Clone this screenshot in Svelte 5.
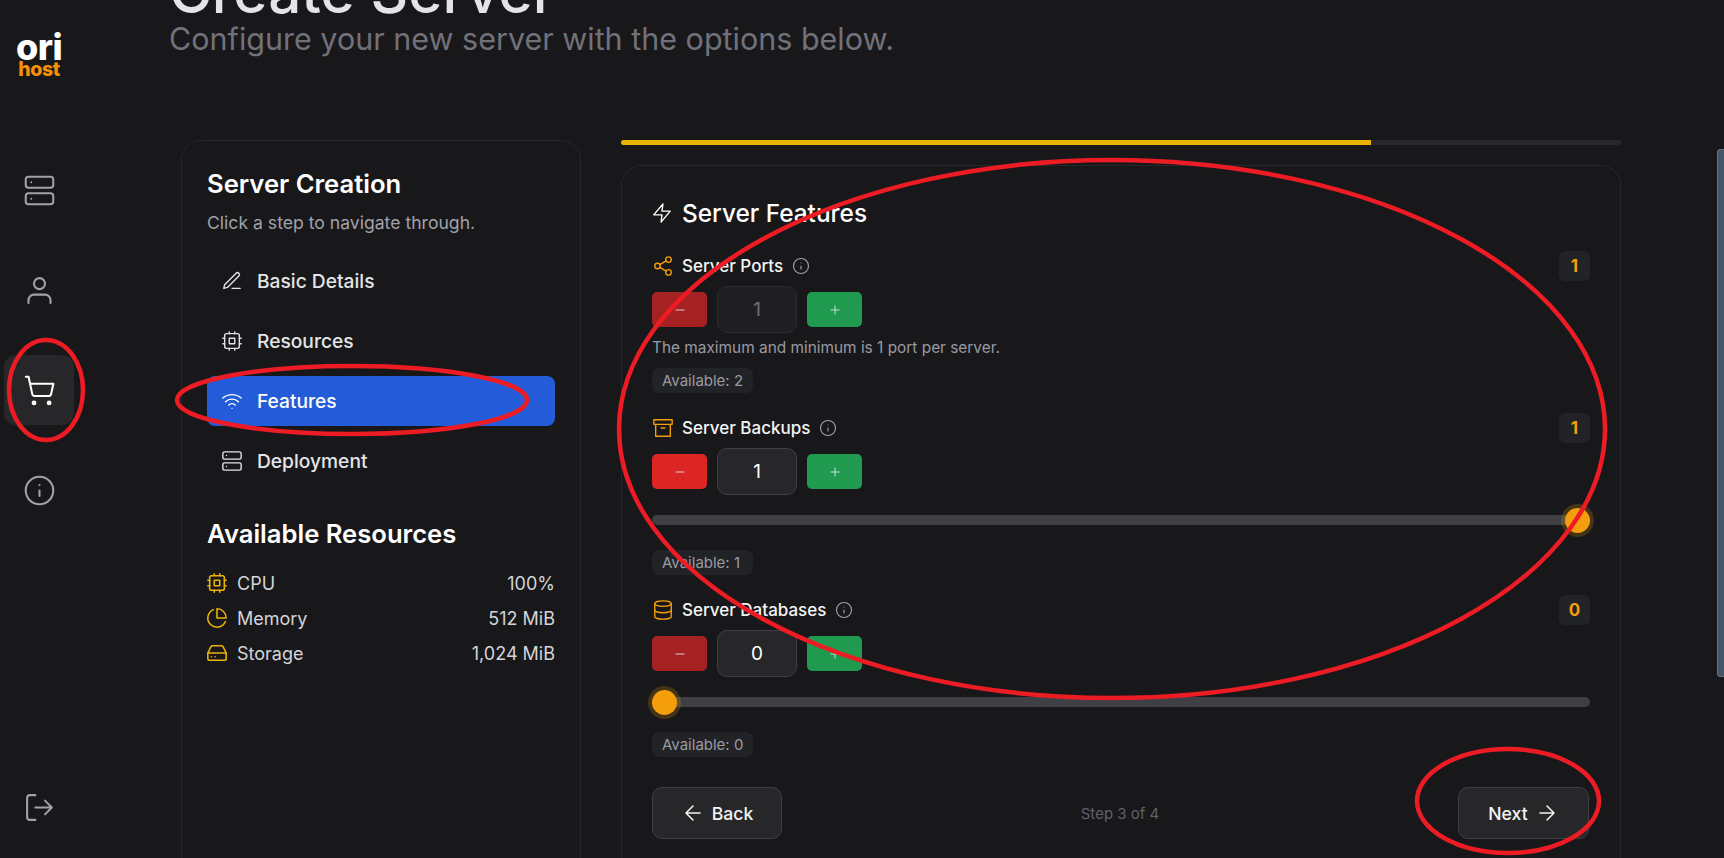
<script>
  const steps = [
    { id: 'basic', label: 'Basic Details', icon: 'pen' },
    { id: 'resources', label: 'Resources', icon: 'cpu' },
    { id: 'features', label: 'Features', icon: 'wifi', active: true },
    { id: 'deployment', label: 'Deployment', icon: 'server' }
  ];

  const available = [
    { label: 'CPU', value: '100%', icon: 'cpu' },
    { label: 'Memory', value: '512 MiB', icon: 'pie' },
    { label: 'Storage', value: '1,024 MiB', icon: 'drive' }
  ];

  const features = [
    { title: 'Server Ports', icon: 'share', value: 1, left: 2, locked: true, hint: 'The maximum and minimum is 1 port per server.' },
    { title: 'Server Backups', icon: 'archive', value: 1, left: 1, max: 1 },
    { title: 'Server Databases', icon: 'database', value: 0, left: 0, max: 1, noMinus: true }
  ];

  const icons = {
    pen: '<path d="M12 20h9"/><path d="M16.5 3.5a2.12 2.12 0 0 1 3 3L7 19l-4 1 1-4Z"/>',
    cpu: '<rect x="4" y="4" width="16" height="16" rx="2"/><rect x="9" y="9" width="6" height="6"/><path d="M15 2v2M15 20v2M2 15h2M2 9h2M20 15h2M20 9h2M9 2v2M9 20v2"/>',
    wifi: '<path d="M12 20h.01"/><path d="M2 8.82a15 15 0 0 1 20 0"/><path d="M5 12.86a10 10 0 0 1 14 0"/><path d="M8.5 16.43a5 5 0 0 1 7 0"/>',
    server: '<rect x="2" y="2" width="20" height="8" rx="2"/><rect x="2" y="14" width="20" height="8" rx="2"/><path d="M6 6h.01M6 18h.01"/>',
    pie: '<path d="M21.21 15.89A10 10 0 1 1 8 2.83"/><path d="M22 12A10 10 0 0 0 12 2v10z"/>',
    drive: '<path d="M22 12H2"/><path d="M5.45 5.11 2 12v6a2 2 0 0 0 2 2h16a2 2 0 0 0 2-2v-6l-3.45-6.89A2 2 0 0 0 16.76 4H7.24a2 2 0 0 0-1.79 1.11z"/><path d="M6 16h.01M10 16h.01"/>',
    zap: '<path d="M13 2 3 14h9l-1 8 10-12h-9l1-8z"/>',
    share: '<circle cx="18" cy="5" r="3"/><circle cx="6" cy="12" r="3"/><circle cx="18" cy="19" r="3"/><path d="m8.59 13.51 6.83 3.98M15.41 6.51l-6.82 3.98"/>',
    archive: '<rect x="2" y="3" width="20" height="5"/><path d="M4 8v13h16V8"/><path d="M10 12h4"/>',
    database: '<ellipse cx="12" cy="5" rx="9" ry="3"/><path d="M3 5v14c0 1.66 4 3 9 3s9-1.34 9-3V5"/><path d="M3 12c0 1.66 4 3 9 3s9-1.34 9-3"/>',
    info: '<circle cx="12" cy="12" r="10"/><path d="M12 16v-4M12 8h.01"/>',
    user: '<circle cx="12" cy="7" r="4"/><path d="M4 21v-2a4 4 0 0 1 4-4h8a4 4 0 0 1 4 4v2"/>',
    cart: '<circle cx="8" cy="21" r="1"/><circle cx="19" cy="21" r="1"/><path d="M2.05 2.05h2l2.66 12.42a2 2 0 0 0 2 1.58h9.78a2 2 0 0 0 1.95-1.57l1.65-7.43H5.12"/>',
    logout: '<path d="M9 21H5a2 2 0 0 1-2-2V5a2 2 0 0 1 2-2h4"/><path d="m16 17 5-5-5-5M21 12H9"/>',
    left: '<path d="m12 19-7-7 7-7M19 12H5"/>',
    right: '<path d="M5 12h14M12 5l7 7-7 7"/>',
    minus: '<path d="M5 12h14"/>',
    plus: '<path d="M5 12h14M12 5v14"/>'
  };
</script>

{#snippet icon(name, cls)}
  <svg class={cls} viewBox="0 0 24 24" fill="none" stroke="currentColor" stroke-linecap="round" stroke-linejoin="round" aria-hidden="true">{@html icons[name]}</svg>
{/snippet}

<div class="app">
  <aside class="rail">
    <div class="logo"><span class="ori">ori</span><span class="host">host</span></div>
    <nav class="rail-nav">
      <a class="rail-link" href="#servers">{@render icon('server', 'rail-icon')}</a>
      <a class="rail-link" href="#account">{@render icon('user', 'rail-icon')}</a>
      <a class="rail-link current" href="#store">{@render icon('cart', 'rail-icon')}</a>
      <a class="rail-link" href="#about">{@render icon('info', 'rail-icon')}</a>
    </nav>
    <a class="rail-link logout" href="#logout">{@render icon('logout', 'rail-icon')}</a>
  </aside>

  <main class="page">
    <header class="page-head">
      <h1>Create Server</h1>
      <p>Configure your new server with the options below.</p>
    </header>

    <div class="columns">
      <section class="steps-card">
        <h2>Server Creation</h2>
        <p class="steps-sub">Click a step to navigate through.</p>
        <ul class="steps">
          {#each steps as step}
            <li class="step" class:active={step.active}>
              {@render icon(step.icon, 'step-icon')}
              <span>{step.label}</span>
            </li>
          {/each}
        </ul>

        <h2 class="res-title">Available Resources</h2>
        <ul class="res-list">
          {#each available as res}
            <li class="res">
              {@render icon(res.icon, 'res-icon')}
              <span class="res-label">{res.label}</span>
              <span class="res-value">{res.value}</span>
            </li>
          {/each}
        </ul>
      </section>

      <div class="form-col">
        <div class="progress"><div class="progress-fill" style="width: 75%"></div></div>

        <section class="form-card">
          <h3 class="form-title">{@render icon('zap', 'title-icon')}Server Features</h3>

          {#each features as f}
            <div class="feature">
              <div class="feature-head">
                {@render icon(f.icon, 'feature-icon')}
                <span class="feature-name">{f.title}</span>
                {@render icon('info', 'info-icon')}
                <span class="count">{f.value}</span>
              </div>
              <div class="stepper">
                <button class="btn-minus" class:dim={f.locked || f.noMinus} aria-label="Decrease">{@render icon('minus', 'step-glyph')}</button>
                <input class="qty" class:locked={f.locked} value={f.value} readonly />
                <button class="btn-plus" aria-label="Increase">{@render icon('plus', 'step-glyph')}</button>
              </div>
              {#if f.hint}
                <p class="hint">{f.hint}</p>
              {:else}
                <input class="range" type="range" min="0" max={f.max} value={f.value} />
              {/if}
              <span class="avail" class:after-range={!f.hint}>Available: {f.left}</span>
            </div>
          {/each}

          <div class="form-foot">
            <button class="nav-btn back">{@render icon('left', 'arrow')}Back</button>
            <span class="step-count">Step 3 of 4</span>
            <button class="nav-btn next">Next{@render icon('right', 'arrow')}</button>
          </div>
        </section>
      </div>
    </div>
  </main>

  <div class="scroll-thumb"></div>

  <svg class="marks" viewBox="0 0 1724 858" fill="none" stroke="#ed1c24" stroke-width="4.5" aria-hidden="true">
    <ellipse cx="46" cy="390" rx="37" ry="50" />
    <ellipse cx="352" cy="400" rx="175" ry="34" />
    <ellipse cx="1112" cy="429" rx="493" ry="269" />
    <ellipse cx="1508" cy="801" rx="91" ry="52" />
  </svg>
</div>

<style>
  :global(body) {
    margin: 0;
    background: #18181b;
    overflow: hidden;
  }
  .app {
    position: relative;
    display: flex;
    height: 858px;
    overflow: hidden;
    background: #18181b;
    color: #fff;
    font-family: Inter, "Liberation Sans", sans-serif;
  }
  ul { list-style: none; margin: 0; padding: 0; }

  /* left icon rail */
  .rail {
    flex: 0 0 90px;
    box-sizing: border-box;
    height: 858px;
    display: flex;
    flex-direction: column;
    align-items: flex-start;
    background: #18181a;
    border-right: 1px solid #1b1b1e;
    padding-top: 33px;
  }
  .logo {
    width: 78px;
    display: flex;
    flex-direction: column;
    align-items: center;
    font-weight: 800;
  }
  .ori { font-size: 36px; line-height: 28px; letter-spacing: -0.5px; }
  .host { font-size: 19.5px; line-height: 16px; color: #f78f08; letter-spacing: -0.4px; }
  .rail-nav {
    display: flex;
    flex-direction: column;
    gap: 30px;
    margin-top: 78px;
    margin-left: 4px;
  }
  .rail-link {
    width: 70px;
    height: 70px;
    display: flex;
    align-items: center;
    justify-content: center;
    color: #a1a1aa;
    border-radius: 12px;
  }
  .rail-link.current { background: #27272a; color: #fff; }
  .logout { margin-top: auto; margin-left: 4px; margin-bottom: 16px; }
  .rail-icon { width: 33px; height: 33px; stroke-width: 1.5; }

  /* page */
  .page { flex: 1; min-width: 0; }
  .page-head { margin: -38px 0 0 79px; }
  h1 {
    margin: 0 0 -1px;
    font-size: 58.4px;
    line-height: 60px;
    font-weight: 500;
    color: #e4e4e7;
  }
  .page-head p {
    margin: 0;
    font-size: 30.5px;
    line-height: 36px;
    color: #71717a;
  }
  .columns {
    display: flex;
    align-items: flex-start;
    gap: 40px;
    margin: 83px 0 0 91px;
  }

  /* steps card */
  .steps-card {
    box-sizing: border-box;
    width: 400px;
    height: 740px;
    padding: 27px 25px;
    border: 1px solid #27272a;
    border-radius: 20px;
    flex: none;
  }
  h2 {
    margin: 0;
    font-size: 25.6px;
    line-height: 32px;
    font-weight: 600;
  }
  .steps-sub {
    margin: 11px 0 0;
    font-size: 17.6px;
    line-height: 24px;
    color: #a1a1aa;
  }
  .steps {
    display: flex;
    flex-direction: column;
    gap: 10px;
    margin-top: 21px;
  }
  .step {
    height: 50px;
    display: flex;
    align-items: center;
    gap: 14px;
    padding-left: 14px;
    border-radius: 8px;
    font-size: 19.2px;
    font-weight: 500;
    color: #e4e4e7;
  }
  .step.active { background: #245bd8; color: #fff; }
  .step-icon { width: 22px; height: 22px; stroke-width: 1.5; flex: none; }
  .res-title { margin-top: 32px; }
  .res-list {
    display: flex;
    flex-direction: column;
    gap: 11px;
    margin-top: 21px;
  }
  .res {
    height: 24px;
    display: flex;
    align-items: center;
    gap: 9px;
    font-size: 18px;
    color: #d4d4d8;
  }
  .res-icon { width: 22px; height: 22px; stroke-width: 1.7; color: #eab308; flex: none; margin-left: -1px; }
  .res-value { margin-left: auto; }

  /* form column */
  .form-col { width: 1000px; flex: none; }
  .progress {
    height: 5px;
    border-radius: 3px;
    background: #27272a;
    overflow: hidden;
  }
  .progress-fill { height: 100%; background: #eab308; }
  .form-card {
    box-sizing: border-box;
    height: 740px;
    margin-top: 20px;
    padding: 31px 30px;
    border: 1px solid #27272a;
    border-radius: 20px;
  }
  .form-title {
    display: flex;
    align-items: center;
    gap: 8px;
    margin: 0 0 22px;
    font-size: 24.4px;
    line-height: 32px;
    font-weight: 500;
  }
  .title-icon { width: 22px; height: 22px; stroke-width: 1.5; flex: none; margin-left: -1px; margin-right: 1px; }
  .feature { margin-bottom: 20px; }
  .feature-head {
    display: flex;
    align-items: center;
    height: 30px;
    font-size: 17px;
    font-weight: 500;
    color: #f4f4f5;
  }
  .feature-icon { width: 22px; height: 22px; stroke-width: 1.5; color: #f59e0b; margin-right: 8px; flex: none; }
  .info-icon { width: 18px; height: 18px; stroke-width: 1.5; color: #a1a1aa; margin-left: 9px; }
  .count {
    margin-left: auto;
    width: 31px;
    height: 30px;
    display: flex;
    align-items: center;
    justify-content: center;
    border-radius: 6px;
    background: #222326;
    color: #f59e0b;
    font-weight: 700;
    font-size: 17px;
  }
  .stepper {
    display: flex;
    align-items: center;
    gap: 10px;
    margin-top: 5px;
  }
  .stepper button {
    width: 55px;
    height: 35px;
    display: flex;
    align-items: center;
    justify-content: center;
    border: 0;
    border-radius: 5px;
    color: #e5e7eb;
    padding: 0;
  }
  .step-glyph { width: 14px; height: 14px; stroke-width: 1.5; }
  .btn-minus { background: #dc2626; }
  .btn-minus.dim { background: #a62121; }
  .btn-plus { background: #1f9a4e; }
  .qty {
    box-sizing: border-box;
    width: 80px;
    height: 47px;
    border: 1px solid #3f3f46;
    border-radius: 10px;
    background: #27272a;
    color: #fff;
    font: 400 19px Inter, sans-serif;
    text-align: center;
    outline: none;
    padding: 0;
  }
  .qty.locked { background: #1f1f22; border-color: #2c2c30; color: #71717a; }
  .hint {
    margin: 5px 0 10px;
    font-size: 15.4px;
    line-height: 20px;
    color: #9a9aa3;
  }
  .range {
    display: block;
    width: 100%;
    height: 10px;
    margin: 20px 0 0;
    appearance: none;
    -webkit-appearance: none;
    background: #3f3f46;
    border-radius: 5px;
    outline: none;
  }
  .range::-webkit-slider-thumb {
    -webkit-appearance: none;
    width: 25px;
    height: 25px;
    border-radius: 50%;
    background: #f59e0b;
    box-shadow: 0 0 0 4px rgba(245, 158, 11, 0.2);
    border: 0;
  }
  .avail {
    display: block;
    width: 101px;
    box-sizing: border-box;
    height: 25px;
    padding: 0 10px;
    border-radius: 7px;
    background: #222326;
    font-size: 15px;
    line-height: 25px;
    color: #9a9aa3;
    white-space: nowrap;
  }
  .avail.after-range { margin-top: 25px; }
  .form-foot {
    display: flex;
    align-items: center;
    justify-content: space-between;
    margin-top: 30px;
  }
  .nav-btn {
    box-sizing: border-box;
    height: 52px;
    display: flex;
    align-items: center;
    justify-content: center;
    gap: 7px;
    border: 1px solid #3f3f46;
    border-radius: 10px;
    background: #27272a;
    color: #f4f4f5;
    font: 500 17.6px Inter, sans-serif;
    padding: 0;
  }
  .back { width: 130px; }
  .next { width: 131px; margin-right: 1px; }
  .arrow { width: 24px; height: 24px; stroke-width: 1.5; }
  .step-count { font-size: 15px; color: #5f616a; }

  /* overlays */
  .scroll-thumb {
    position: absolute;
    top: 149px;
    right: 0;
    width: 7px;
    height: 528px;
    box-sizing: border-box;
    background: #475569;
    border: 1px solid #64748b;
    border-right: 0;
    border-radius: 4px 0 0 4px;
  }
  .marks {
    position: absolute;
    inset: 0;
    width: 1724px;
    height: 858px;
    pointer-events: none;
  }
</style>
